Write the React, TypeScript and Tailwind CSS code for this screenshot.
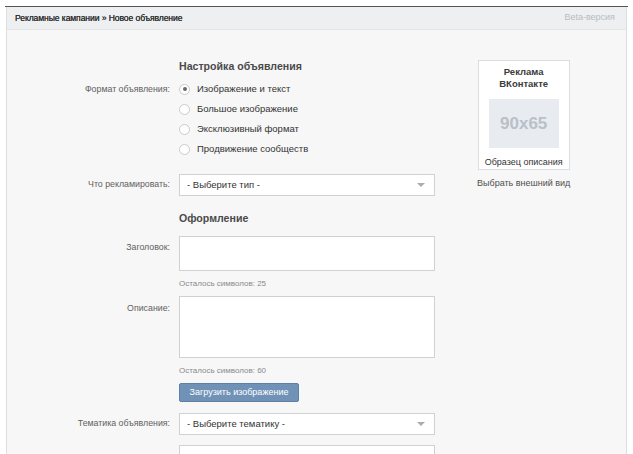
const font = { fontFamily: '"Liberation Sans", Arial, sans-serif' };

function Radio({ label, checked }: { label: string; checked?: boolean }) {
  return (
    <div className="flex h-[20px] items-center gap-[7px]">
      <span className="flex h-[11px] w-[11px] items-center justify-center rounded-full border border-[#c8cbce] bg-white">
        {checked && <span className="h-[4px] w-[4px] rounded-full bg-[#6b6b6b]" />}
      </span>
      <span className="text-[9.5px] text-[#333]">{label}</span>
    </div>
  );
}

function Select({ placeholder }: { placeholder: string }) {
  return (
    <div className="flex h-[22px] w-[256px] items-center justify-between border border-[#cfd2d5] bg-white pl-[7px] pr-[9px]">
      <span className="text-[9.5px] text-[#333]">{placeholder}</span>
      <svg width="8" height="4" viewBox="0 0 8 4">
        <path d="M0 0h8L4 4z" fill="#a8adb2" />
      </svg>
    </div>
  );
}

function Row({ label, children, labelPad = "pt-0", center }: { label?: string; children: React.ReactNode; labelPad?: string; center?: boolean }) {
  return (
    <div className={`flex ${center ? "items-center" : "items-start"}`}>
      <div className={`w-[164px] shrink-0 pr-[1px] text-right text-[8.8px] text-[#5f5f5f] ${labelPad}`}>{label}</div>
      <div className="ml-[8px]">{children}</div>
    </div>
  );
}

export default function App() {
  return (
    <div className="h-[454px] w-[633px] overflow-hidden bg-white pt-[6px]" style={font}>
      <div className="ml-[5px] w-[623px] border-t border-[#555]">
        <div className="ml-[1px] w-[621px] border-x border-[#dcdfe2] bg-[#f7f7f7]">
          <div className="flex h-[23px] items-center justify-between border-b border-[#e3e5e7] bg-[#edeff1] pl-[8px] pr-[11px]">
            <span className="text-[8.6px] tracking-[-0.1px] text-[#2f2f2f] [text-shadow:0_0_0.4px_#2f2f2f]">Рекламные кампании » Новое объявление</span>
            <span className="text-[9px] text-[#b9bcc0]">Beta-версия</span>
          </div>

          <div className="flex h-[430px] pt-[29px]">
            <div className="flex flex-col">
              <Row>
                <div className="h-[14px] text-[10.6px] leading-[14px] font-bold text-[#4a4a4a]">Настройка объявления</div>
              </Row>
              <div className="mt-[6px]">
                <Row label="Формат объявления:" labelPad="pt-[4px]">
                  <Radio label="Изображение и текст" checked />
                  <Radio label="Большое изображение" />
                  <Radio label="Эксклюзивный формат" />
                  <Radio label="Продвижение сообществ" />
                </Row>
              </div>
              <div className="mt-[15px]">
                <Row label="Что рекламировать:" center>
                  <Select placeholder="- Выберите тип -" />
                </Row>
              </div>
              <div className="mt-[15px]">
                <Row>
                  <div className="h-[14px] text-[10.6px] leading-[14px] font-bold text-[#4a4a4a]">Оформление</div>
                </Row>
              </div>
              <div className="mt-[11px]">
                <Row label="Заголовок:" labelPad="pt-[5px]">
                  <div className="h-[35px] w-[256px] border border-[#cfd2d5] bg-white" />
                  <div className="mt-[8px] h-[10px] text-[8px] leading-[10px] text-[#8a8a8a]">Осталось символов: 25</div>
                </Row>
              </div>
              <div className="mt-[7px]">
                <Row label="Описание:" labelPad="pt-[6px]">
                  <div className="h-[62px] w-[256px] border border-[#cfd2d5] bg-white" />
                  <div className="mt-[8px] h-[10px] text-[8px] leading-[10px] text-[#8a8a8a]">Осталось символов: 60</div>
                  <button className="mt-[7px] flex h-[19px] w-[120px] items-center justify-center rounded-[2px] border border-[#5f80a6] bg-[#7192b7] text-[9px] text-white">
                    Загрузить изображение
                  </button>
                </Row>
              </div>
              <div className="mt-[11px]">
                <Row label="Тематика объявления:" center>
                  <Select placeholder="- Выберите тематику -" />
                </Row>
              </div>
              <div className="mt-[10px]">
                <Row>
                  <div className="h-[22px] w-[256px] border border-[#cfd2d5] bg-white" />
                </Row>
              </div>
            </div>

            <div className="ml-[42px] flex flex-col items-center pt-[1px]">
              <div className="flex h-[110px] w-[92px] flex-col items-center border border-[#dadde0] bg-white pt-[5px]">
                <div className="text-center text-[9.5px] leading-[12px] font-bold text-[#3b3b3b]">
                  Реклама
                  <br />
                  ВКонтакте
                </div>
                <div className="mt-[9px] flex h-[50px] w-[70px] items-center justify-center bg-[#e8ecf0]">
                  <span className="text-[17px] font-bold text-[#b8c0c9]">90x65</span>
                </div>
                <div className="mt-[8px] text-[9px] text-[#333]">Образец описания</div>
              </div>
              <div className="mt-[7px] text-[9px] text-[#4f4f4f]">Выбрать внешний вид</div>
            </div>
          </div>
        </div>
      </div>
    </div>
  );
}
